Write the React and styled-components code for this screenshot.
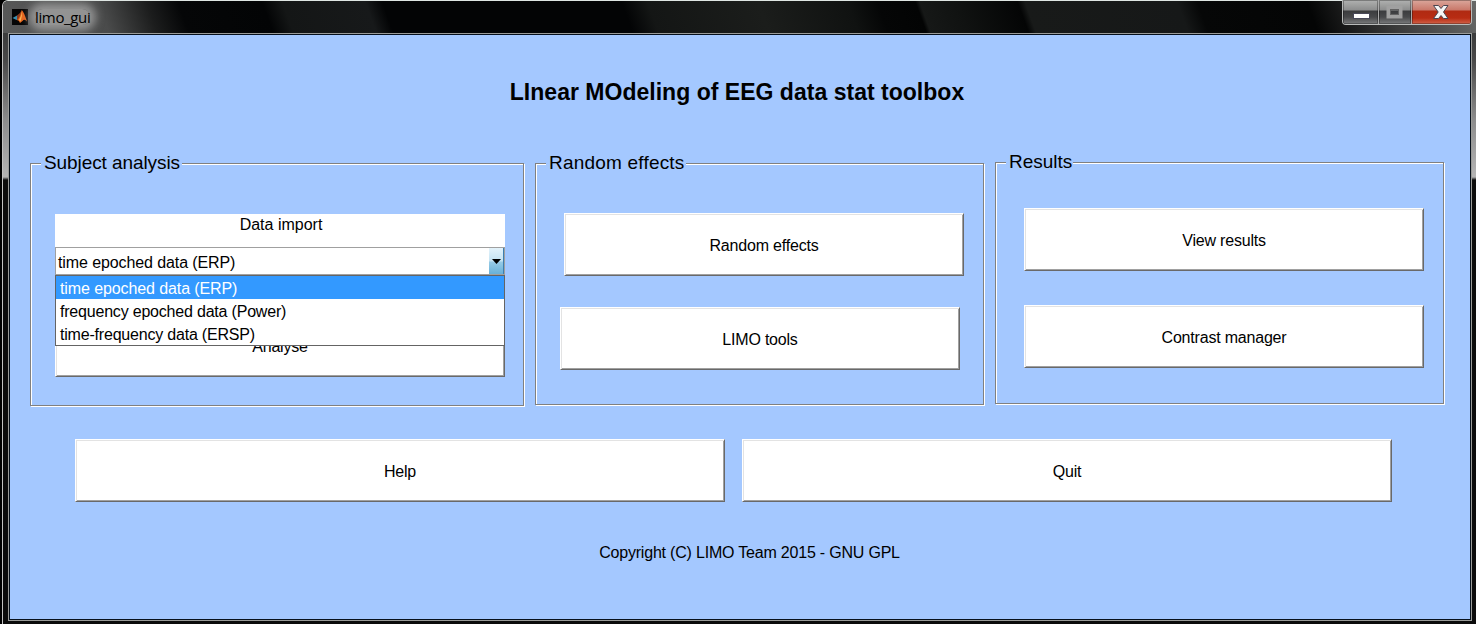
import React from 'react';
import styled, { createGlobalStyle } from 'styled-components';

const BLUE = '#a4c8ff';

const GlobalStyle = createGlobalStyle`
  * { box-sizing: border-box; }
  body { margin: 0; background: #000; overflow: hidden; }
`;

const Frame = styled.div`
  width: 1476px;
  height: 624px;
  padding: 0 0 0 2px;
  background: #000;
  font-family: "Liberation Sans", Arial, sans-serif;
  font-size: 16px;
  letter-spacing: -0.2px;
  color: #000;
`;

const Window = styled.div`
  display: flex;
  flex-direction: column;
  height: 624px;
  border-top: 1px solid #dfe6e3;
  border-left: 1px solid #c3c3c3;
  border-top-left-radius: 6px;
  background:
    linear-gradient(180deg, #2a2b2b 0, #4a4a4a 60px, #8d8d8d 120px, #b4b4b4 176px, #0c0c0c 179px, #0b0b0b 100%);
`;

const TitleBar = styled.header`
  display: flex;
  align-items: flex-start;
  height: 32px;
  border-top-left-radius: 5px;
  background: linear-gradient(70deg,
    #585959 0, #4a4b4b 100px, #1c1d1d 145px, #050607 175px, #030405 254px,
    #141616 273px, #17191a 351px, #030405 367px, #030405 592px,
    #141615 616px, #1b1d1b 720px, #101211 804px, #050606 832px,
    #030404 868px, #161817 872px, #101211 907px, #040505 964px,
    #181a19 971px, #161818 1114px, #060707 1133px, #040505 1236px,
    #3a3a3a 1311px, #686968 1395px);
`;

const AppName = styled.div`
  display: flex;
  align-items: center;
  gap: 7px;
  padding: 8px 0 0 9px;
`;

const NameText = styled.span`
  font-family: "Open Sans", "Noto Sans", sans-serif;
  font-size: 15px;
  line-height: 16px;
  letter-spacing: -0.35px;
  border-radius: 10px;
  background: rgba(170,170,170,.75);
  box-shadow: 0 0 8px 6px rgba(170,170,170,.75);
`;

const Controls = styled.div`
  display: flex;
  height: 25px;
  margin: -1px 4px 0 auto;
  border: 1px solid #b9bbba;
  border-top: 0;
  border-radius: 0 0 4px 4px;
  overflow: hidden;
`;

const Control = styled.div`
  display: flex;
  align-items: flex-start;
  justify-content: center;
  width: ${p => p.$width}px;
  padding-right: ${p => (p.$last ? 1 : 0)}px;
  border-right: ${p => (p.$last ? 0 : '1px solid #aaa')};
  box-shadow: inset 0 0 0 1px rgba(0,0,0,.3);
  background: ${p => p.$close
    ? 'linear-gradient(180deg, #dba79c 0, #c9786a 10px, #b02a12 11px, #b82c13 18px, #d2634a 100%)'
    : 'linear-gradient(180deg, #b1b2b1 0, #8c8d8d 10px, #3b3c3e 11px, #48494b 17px, #7c7d7e 100%)'};
`;

const Client = styled.main`
  width: 1464px;
  height: 588px;
  margin-left: 5px;
  border: 1px solid #9a9b98;
  background: ${BLUE};
  box-shadow: inset 0 0 0 1px #06101c;
  padding: 1px;
`;

const Heading = styled.h1`
  margin: 0;
  padding: 44px 6px 0 0;
  height: 127px;
  font-size: 23px;
  line-height: 27px;
  text-align: center;
  letter-spacing: 0.02px;
`;

const Panels = styled.div`
  display: flex;
  gap: 11px;
  padding-left: 20px;
  height: 277px;
`;

const Panel = styled.section`
  position: relative;
  display: flex;
  flex-direction: column;
  width: ${p => p.$width}px;
  height: ${p => p.$height}px;
  margin-top: ${p => p.$top}px;
  padding: ${p => p.$padding};
  border: 1px solid #808080;
  box-shadow: 1px 1px 0 #fff, inset 1px 1px 0 #fff;
`;

const Legend = styled.h2`
  position: absolute;
  left: 10px;
  top: -12px;
  margin: 0;
  padding: 0 0 0 3px;
  width: ${p => p.$width}px;
  background: ${BLUE};
  font-size: 19px;
  font-weight: 400;
  line-height: 22px;
  white-space: nowrap;
  letter-spacing: ${p => p.$spacing || '0'};
`;

const Button = styled.button`
  width: ${p => p.$width || 400}px;
  height: 63px;
  flex: none;
  margin: ${p => p.$margin || 0};
  padding: 2px 0 0;
  border: 1px solid;
  border-color: #fff #696969 #696969 #fff;
  box-shadow: inset 1px 1px 0 #e3e3e3, inset -1px -1px 0 #a0a0a0;
  background: #fff;
  color: #000;
  font: inherit;
  letter-spacing: inherit;
`;

const ImportLabel = styled.div`
  width: 450px;
  height: 33px;
  padding: 1px 0 0 2px;
  background: #fff;
  text-align: center;
  line-height: 20px;
  letter-spacing: 0;
`;

const Select = styled.div`
  position: relative;
  display: flex;
  width: 450px;
  height: 28px;
  border: 1px solid #a0a0a0;
  background: #fff;
`;

const SelectValue = styled.span`
  flex: 1;
  padding: 2px 0 0 2px;
  line-height: 26px;
  letter-spacing: -0.1px;
`;

const Arrow = styled.span`
  display: flex;
  align-items: center;
  justify-content: center;
  width: 15px;
  height: 26px;
  border-right: 1px solid #3c7fb1;
  background: linear-gradient(180deg, #e4f3fb 0, #c4e3f3 13px, #97cbe6 14px, #68b0d8 100%);
`;

const Options = styled.ul`
  position: absolute;
  left: -1px;
  top: 27px;
  z-index: 1;
  width: 450px;
  height: 71px;
  margin: 0;
  padding: 0;
  list-style: none;
  border: 1px solid #646464;
  background: #fff;
`;

const Option = styled.li`
  height: 23px;
  padding: 1px 0 0 4px;
  line-height: 23px;
  letter-spacing: ${p => (p.$selected ? '-0.1px' : '-0.2px')};
  color: ${p => (p.$selected ? '#fff' : '#000')};
  background: ${p => (p.$selected ? '#3399ff' : 'transparent')};
`;

const Actions = styled.div`
  display: flex;
  gap: 17px;
  padding-left: 65px;
`;

const Copyright = styled.footer`
  padding: 41px 0 0 19px;
  line-height: 20px;
  text-align: center;
`;

const MatlabIcon = () => (
  <svg width="16" height="16" viewBox="0 0 16 16">
    <rect width="16" height="16" fill="#050505" />
    <path d="M0.5 9 L5 6.5 L7 7.5 L5 11 L3.5 10.5Z" fill="#3c8fb0" />
    <path d="M5 6.5 Q8 5 9.8 1 L8.5 8 L5 11.5Z" fill="#8b3a1c" />
    <path d="M9.8 1 Q12 3 15 12.5 Q12.5 9.5 10.5 12 L8 14 Q7 11 5 11 Q8 9 9.8 1Z" fill="#e8641b" />
    <path d="M10 2 Q10.5 7 8.5 12.5 L7 11 Q9.5 7 10 2Z" fill="#f9b955" />
  </svg>
);

export default function App() {
  return (
    <Frame>
      <GlobalStyle />
      <Window>
        <TitleBar>
          <AppName>
            <MatlabIcon />
            <NameText>limo_gui</NameText>
          </AppName>
          <Controls>
            <Control $width={36}>
              <svg width="18" height="24"><rect x="1.5" y="13.5" width="16" height="5" fill="#fff" stroke="#484858" /></svg>
            </Control>
            <Control $width={33}>
              <svg width="18" height="24">
                <rect x="2.5" y="7.5" width="12" height="9" fill="none" stroke="#a0a0a0" strokeWidth="4" />
                <rect x="4.5" y="9.5" width="8" height="5" fill="none" stroke="#626262" />
              </svg>
            </Control>
            <Control $width={59} $close $last>
              <svg width="18" height="24">
                <path d="M1.500 5.500H6.500L9 8.500L11.500 5.500H16L11.500 12L16 18.500H11.500L9 15.500L6.500 18.500H1.500L6.200 12Z" fill="#f5f5f5" stroke="#4c4550" />
              </svg>
            </Control>
          </Controls>
        </TitleBar>
        <Client>
          <Heading>LInear MOdeling of EEG data stat toolbox</Heading>
          <Panels>
            <Panel $width={494} $height={243} $top={1} $padding="50px 0 0 24px">
              <Legend $width={141} $spacing="-0.08px">Subject analysis</Legend>
              <ImportLabel>Data import</ImportLabel>
              <Select>
                <SelectValue>time epoched data (ERP)</SelectValue>
                <Arrow>
                  <svg width="9" height="5"><path d="M0 0H9L4.500 5Z" fill="#000" /></svg>
                </Arrow>
                <Options>
                  <Option $selected>time epoched data (ERP)</Option>
                  <Option>frequency epoched data (Power)</Option>
                  <Option>time-frequency data (ERSP)</Option>
                </Options>
              </Select>
              <Button $width={450} $margin="39px 0 0">Analyse</Button>
            </Panel>
            <Panel $width={449} $height={242} $top={1} $padding="49px 0 0 24px">
              <Legend $width={140} $spacing="0.2px">Random effects</Legend>
              <Button $margin="0 0 0 4px">Random effects</Button>
              <Button $margin="31px 0 0">LIMO tools</Button>
            </Panel>
            <Panel $width={449} $height={242} $top={0} $padding="45px 0 0 28px">
              <Legend $width={67}>Results</Legend>
              <Button>View results</Button>
              <Button $margin="34px 0 0">Contrast manager</Button>
            </Panel>
          </Panels>
          <Actions>
            <Button $width={650}>Help</Button>
            <Button $width={650}>Quit</Button>
          </Actions>
          <Copyright>Copyright (C) LIMO Team 2015 - GNU GPL</Copyright>
        </Client>
      </Window>
    </Frame>
  );
}
